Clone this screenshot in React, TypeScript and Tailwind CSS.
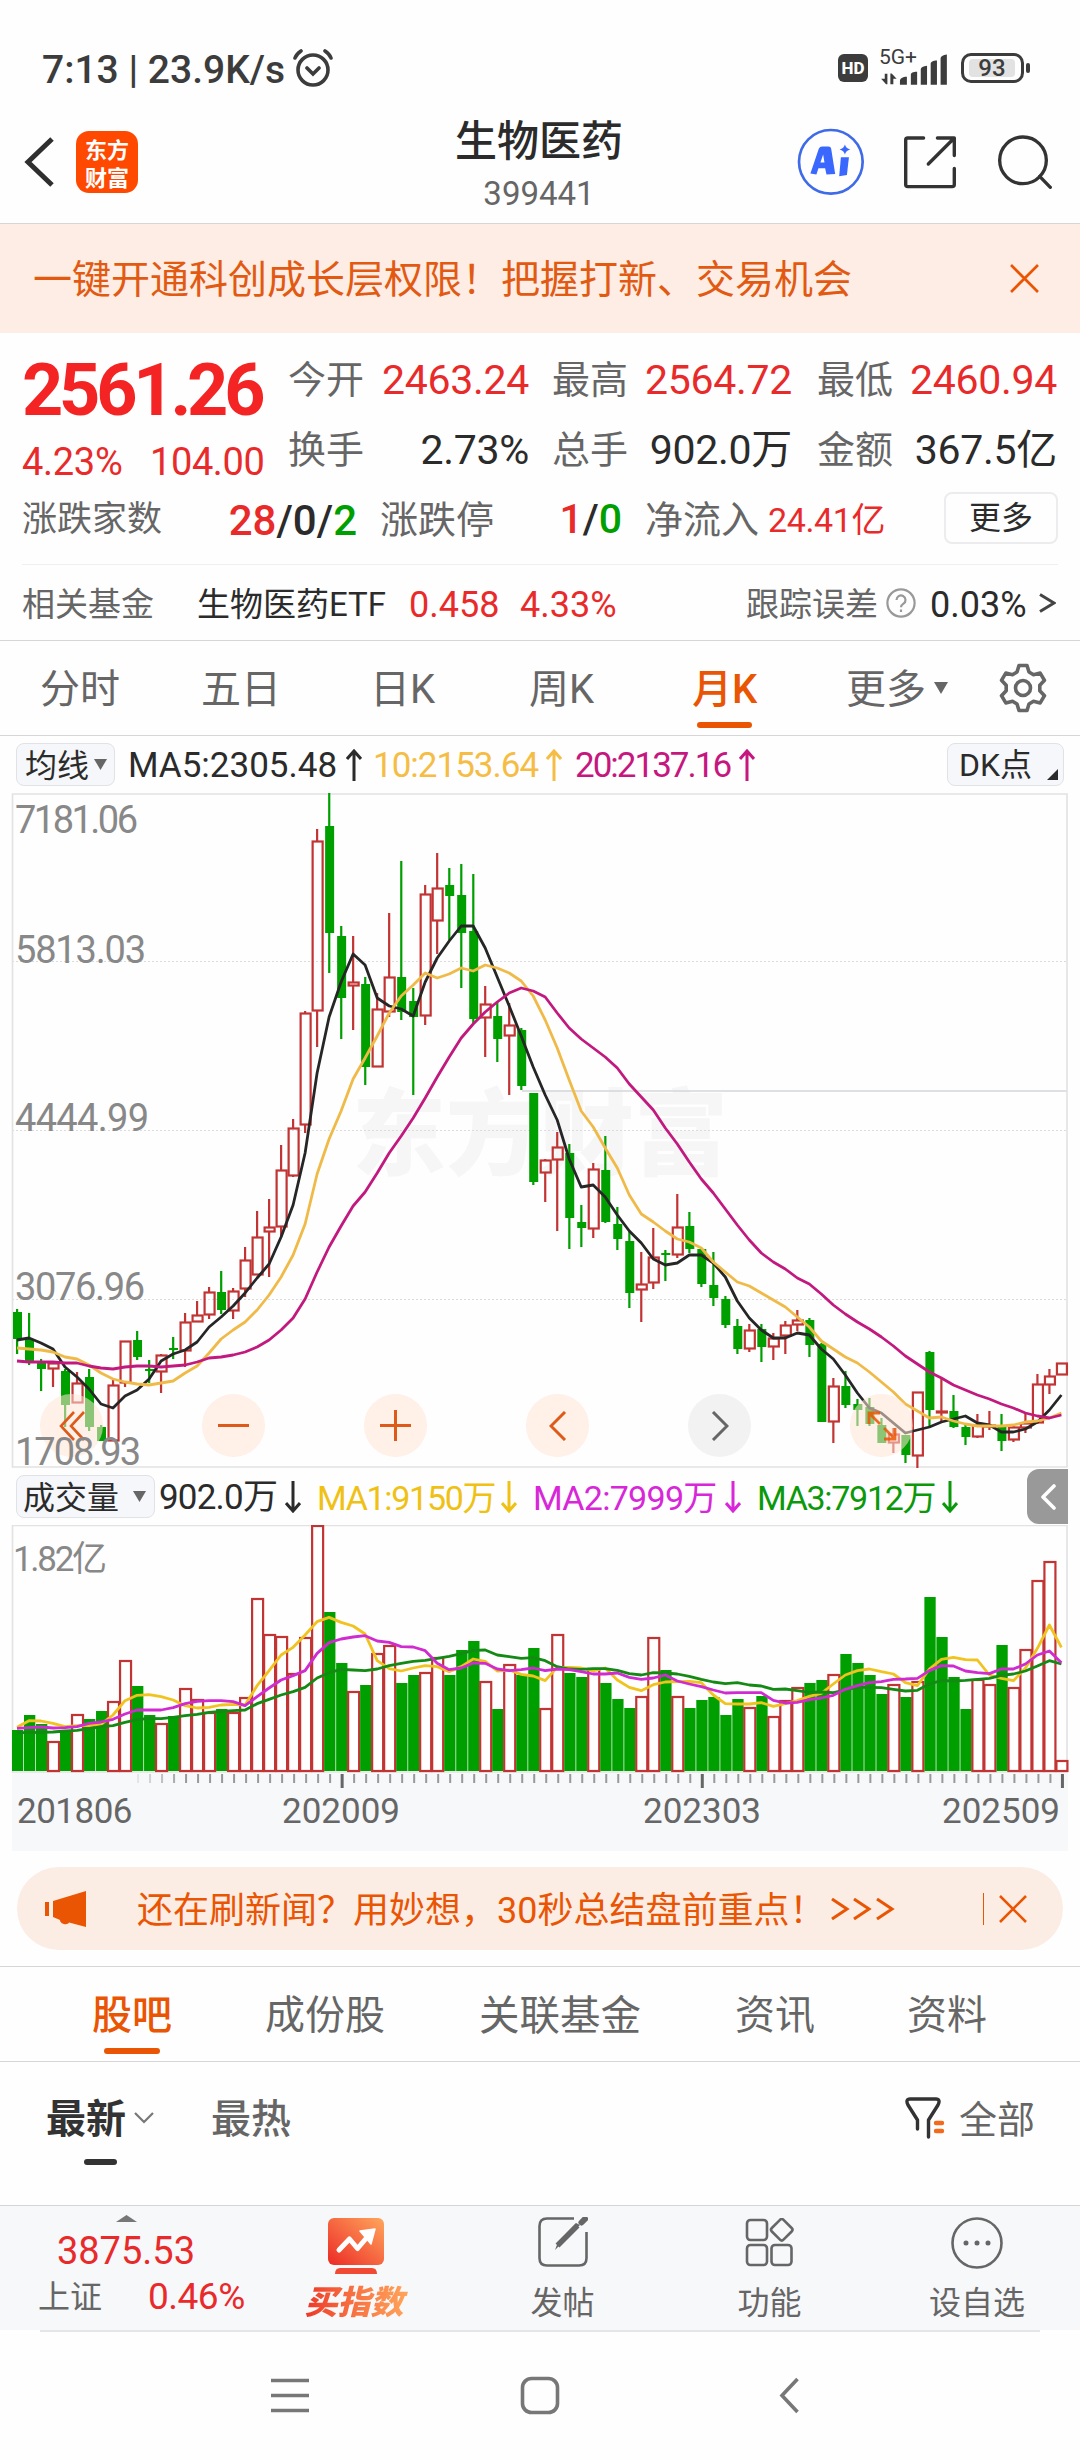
import type { ReactNode } from 'react';
import { twMerge } from 'tailwind-merge';

const STEP = 12.005;
const FIRST_X = 17;

// [direction, high, body top, body bottom, low]
type Candle = [0 | 1, number, number, number, number];

const candles: Candle[] = [
  [0, 1309, 1312, 1339, 1354], [0, 1313, 1339, 1362, 1365], [0, 1359, 1363, 1369, 1391], [1, 1363, 1363, 1369, 1387],
  [0, 1369, 1371, 1405, 1427], [1, 1372, 1383, 1403, 1403], [0, 1369, 1377, 1427, 1431], [0, 1425, 1427, 1441, 1441],
  [1, 1379, 1385, 1441, 1441], [1, 1341, 1341, 1383, 1387], [0, 1331, 1340, 1357, 1360], [0, 1360, 1369, 1371, 1383],
  [1, 1354, 1355, 1372, 1393], [0, 1337, 1348, 1350, 1359], [1, 1313, 1322, 1351, 1367], [1, 1301, 1315, 1322, 1322],
  [1, 1287, 1292, 1315, 1319], [0, 1271, 1292, 1310, 1314], [1, 1288, 1291, 1311, 1319], [1, 1247, 1260, 1289, 1297],
  [1, 1211, 1237, 1275, 1275], [1, 1199, 1227, 1232, 1277], [1, 1145, 1170, 1227, 1237], [1, 1119, 1128, 1176, 1177],
  [1, 1011, 1013, 1125, 1133], [1, 829, 841, 1011, 1047], [0, 793, 826, 933, 973], [0, 926, 936, 998, 1039],
  [1, 936, 982, 986, 1030], [0, 977, 984, 1067, 1085], [1, 993, 1009, 1067, 1067], [1, 913, 977, 1012, 1017],
  [0, 861, 977, 1012, 1020], [0, 988, 1001, 1017, 1095], [1, 885, 894, 1016, 1025], [1, 853, 888, 921, 954],
  [0, 868, 885, 896, 940], [0, 864, 895, 933, 988], [0, 874, 931, 1019, 1023], [1, 986, 1004, 1018, 1057],
  [0, 1002, 1016, 1039, 1062], [1, 1003, 1025, 1036, 1095], [0, 1028, 1030, 1086, 1090], [0, 1093, 1093, 1182, 1185],
  [1, 1159, 1160, 1173, 1202], [1, 1132, 1147, 1160, 1231], [0, 1144, 1153, 1218, 1249], [0, 1205, 1222, 1228, 1247],
  [1, 1163, 1169, 1229, 1238], [0, 1136, 1170, 1222, 1223], [0, 1207, 1224, 1239, 1250], [0, 1232, 1241, 1293, 1308],
  [1, 1252, 1284, 1290, 1322], [1, 1228, 1257, 1283, 1289], [0, 1250, 1253, 1255, 1281], [1, 1194, 1227, 1255, 1258],
  [0, 1212, 1226, 1249, 1253], [0, 1249, 1249, 1284, 1287], [0, 1252, 1285, 1298, 1306], [0, 1296, 1299, 1325, 1328],
  [0, 1319, 1326, 1349, 1354], [1, 1324, 1330, 1349, 1352], [0, 1324, 1329, 1347, 1362], [1, 1333, 1338, 1347, 1360],
  [1, 1321, 1325, 1336, 1354], [1, 1310, 1320, 1325, 1331], [0, 1318, 1320, 1345, 1357], [0, 1343, 1344, 1422, 1422],
  [1, 1378, 1386, 1422, 1443], [0, 1371, 1386, 1405, 1408], [0, 1399, 1404, 1410, 1426], [0, 1398, 1407, 1424, 1426],
  [0, 1418, 1425, 1443, 1443], [1, 1428, 1434, 1443, 1453], [0, 1435, 1435, 1455, 1463], [1, 1392, 1392, 1456, 1468],
  [0, 1351, 1352, 1410, 1427], [1, 1378, 1411, 1412, 1423], [0, 1395, 1411, 1427, 1428], [0, 1425, 1427, 1437, 1445],
  [1, 1414, 1425, 1437, 1438], [1, 1411, 1425, 1427, 1430], [0, 1414, 1427, 1441, 1451], [1, 1425, 1427, 1440, 1442],
  [1, 1413, 1423, 1428, 1433], [1, 1374, 1384, 1423, 1424], [1, 1369, 1376, 1385, 1394], [1, 1363, 1363, 1375, 1375],
];

const ma5 = [
  1340, 1338, 1343, 1349, 1367, 1377, 1389, 1404, 1408, 1396, 1390, 1379, 1361, 1354, 1350, 1342, 1327, 1317, 1306, 1293,
  1278, 1264, 1237, 1205, 1153, 1073, 1017, 982, 954, 965, 998, 1006, 1009, 1016, 982, 958, 941, 926, 926, 948, 977, 1006,
  1036, 1067, 1095, 1120, 1159, 1187, 1185, 1197, 1215, 1231, 1243, 1259, 1265, 1263, 1255, 1255, 1263, 1277, 1301, 1318,
  1330, 1338, 1338, 1333, 1335, 1349, 1359, 1375, 1393, 1408, 1413, 1423, 1433, 1430, 1427, 1422, 1419, 1416, 1423, 1425,
  1432, 1432, 1429, 1422, 1410, 1395,
];
const ma10 = [
  1348, 1349, 1350, 1352, 1357, 1359, 1365, 1373, 1379, 1382, 1384, 1385, 1383, 1381, 1373, 1366, 1353, 1339, 1330, 1322,
  1310, 1295, 1277, 1255, 1224, 1174, 1139, 1111, 1079, 1058, 1036, 1013, 996, 985, 973, 978, 974, 968, 971, 965, 968, 973,
  981, 996, 1020, 1048, 1080, 1111, 1127, 1148, 1168, 1195, 1214, 1222, 1231, 1239, 1242, 1248, 1262, 1272, 1282, 1286,
  1293, 1300, 1307, 1317, 1327, 1341, 1349, 1357, 1363, 1372, 1382, 1392, 1404, 1411, 1418, 1417, 1421, 1424, 1426, 1426,
  1426, 1425, 1422, 1421, 1418, 1413,
];
const ma20 = [
  1361, 1362, 1362, 1362, 1363, 1363, 1366, 1368, 1369, 1367, 1366, 1366, 1367, 1366, 1365, 1362, 1358, 1357, 1355, 1352,
  1347, 1340, 1330, 1318, 1299, 1272, 1247, 1226, 1206, 1192, 1173, 1153, 1136, 1118, 1098, 1077, 1057, 1038, 1024, 1012,
  1002, 993, 988, 991, 997, 1013, 1028, 1039, 1048, 1057, 1068, 1084, 1097, 1110, 1128, 1144, 1162, 1179, 1193, 1209, 1225,
  1240, 1253, 1262, 1269, 1278, 1284, 1294, 1305, 1314, 1322, 1329, 1337, 1346, 1356, 1364, 1372, 1378, 1385, 1390, 1395,
  1399, 1404, 1408, 1413, 1416, 1418, 1415,
];

const volumes = [
  1730, 1715, 1724, 1741, 1730, 1714, 1719, 1711, 1701, 1660, 1686, 1715, 1723, 1716, 1688, 1699, 1712, 1709, 1712, 1697,
  1598, 1634, 1636, 1673, 1637, 1525, 1612, 1663, 1691, 1685, 1653, 1645, 1683, 1675, 1672, 1657, 1675, 1650, 1641, 1681,
  1709, 1664, 1675, 1648, 1708, 1634, 1673, 1677, 1668, 1683, 1699, 1708, 1696, 1637, 1670, 1696, 1708, 1700, 1697, 1715,
  1699, 1707, 1696, 1716, 1700, 1687, 1683, 1680, 1674, 1654, 1663, 1675, 1694, 1684, 1697, 1681, 1597, 1637, 1677, 1709,
  1679, 1684, 1645, 1687, 1649, 1580, 1561, 1760,
];
const volMa1 = [
  802, 782, 783, 790, 800, 797, 797, 793, 765, 722, 706, 704, 710, 720, 737, 744, 742, 735, 733, 735, 677, 632, 585, 562, 525,
  485, 472, 487, 498, 522, 602, 626, 633, 624, 617, 620, 635, 620, 597, 604, 633, 630, 643, 648, 662, 622, 622, 624, 633, 624,
  660, 682, 692, 674, 666, 665, 664, 668, 705, 731, 732, 732, 728, 739, 731, 722, 709, 700, 672, 645, 632, 627, 635, 642, 668,
  677, 627, 598, 592, 599, 600, 645, 655, 662, 625, 565, 495, 562,
];
const volMa2 = [
  805, 803, 801, 804, 803, 800, 790, 786, 778, 762, 750, 750, 750, 743, 731, 724, 722, 722, 725, 737, 710, 684, 660, 647, 632,
  580, 548, 537, 531, 527, 543, 547, 560, 561, 572, 610, 629, 624, 609, 610, 627, 632, 629, 624, 632, 627, 629, 635, 642, 642,
  639, 652, 658, 654, 645, 663, 672, 680, 690, 699, 698, 698, 698, 721, 729, 727, 719, 714, 706, 688, 677, 668, 665, 658, 657,
  655, 632, 617, 618, 633, 638, 641, 627, 627, 612, 585, 573, 608,
];
const volMa3 = [
  818, 818, 817, 816, 813, 811, 806, 800, 797, 787, 779, 775, 776, 772, 767, 763, 757, 754, 752, 750, 731, 718, 705, 695, 682,
  654, 638, 628, 630, 632, 627, 617, 610, 604, 601, 595, 589, 581, 571, 570, 585, 590, 595, 593, 602, 620, 627, 628, 626, 626,
  631, 641, 645, 638, 639, 642, 649, 658, 666, 671, 668, 675, 678, 688, 687, 692, 697, 696, 698, 690, 682, 682, 683, 688, 693,
  691, 672, 662, 663, 661, 658, 655, 646, 642, 633, 618, 602, 612,
];

const priceLabels = [
  { text: '7181.06', y: 833, width: 123 },
  { text: '5813.03', y: 963, width: 131 },
  { text: '4444.99', y: 1131, width: 134 },
  { text: '3076.96', y: 1300, width: 130 },
  { text: '1708.93', y: 1465, width: 126 },
];

function xAt(index: number) {
  return FIRST_X + index * STEP;
}

function toPoints(values: number[]) {
  return values.map((y, i) => `${xAt(i).toFixed(1)},${y}`).join(' ');
}

function toVolumePoints(values: number[]) {
  return toPoints(values.map((v) => 1460 + v / 3));
}

function Text({ className, children }: { className?: string; children: ReactNode }) {
  return <span className={twMerge('block shrink-0 whitespace-nowrap translate-y-[1.5px]', className)}>{children}</span>;
}

function Arrow({ down, className }: { down?: boolean; className?: string }) {
  return (
    <svg viewBox="0 0 16 32" className={twMerge('w-4 h-8 shrink-0', className)} fill="none" stroke="currentColor" strokeWidth="3">
      {down ? <path d="M8 0v30M1 22l7 8 7-8" /> : <path d="M8 32V2M1 10l7-8 7 8" />}
    </svg>
  );
}

function StatusBar() {
  return (
    <div className="flex items-center h-[100px] pt-9 text-[#3c3c3c]">
      <Text className="ml-[42px] w-[246px] text-[39px] font-medium">7:13 | 23.9K/s</Text>
      <svg viewBox="0 0 40 38" className="ml-[5px] w-10 h-[38px] shrink-0" fill="none" stroke="currentColor" strokeWidth="3.6" strokeLinecap="round">
        <circle cx="20" cy="21" r="15" />
        <path d="M14 19l6 6 6-6M2 9c1-3 3-5 6-7M38 9c-1-3-3-5-6-7" />
      </svg>
      <div className="ml-auto w-[30px] h-7 rounded-md bg-[#3c3c3c] text-white text-[17px] font-extrabold leading-7 text-center">HD</div>
      <div className="relative ml-[9px] w-[74px] h-10">
        <span className="absolute left-0.5 -top-[3px] text-[21px] leading-6">5G+</span>
        <svg viewBox="290 20 215 115" className="w-[72px] h-[38px]" fill="currentColor">
          <path d="M312 98h8v32h-4l-15-17h11zM329 130V97h4l15 16h-10v17z" />
          <path d="M358 131v-12c0-6 8-12 21-12v24zM391 131v-30c0-5 6-9 19-9v39zM421 131V84c0-5 7-9 19-10v57zM451 131V68c0-6 7-10 19-10v73zM481 131V53c0-7 7-12 19-13v91z" />
        </svg>
      </div>
      <div className="ml-[10px] w-[63px] h-[30px] rounded-[10px] border-3 border-[#3c3c3c] p-[3px]">
        <div className="h-full w-[46px] ml-0.5 bg-[#e2e2e2] rounded-sm text-[24px] leading-[19px] font-medium text-center">93</div>
      </div>
      <div className="ml-0.5 mr-[50px] w-1 h-[10px] rounded-full bg-[#3c3c3c]" />
    </div>
  );
}

function Header() {
  return (
    <header className="flex items-center h-[124px] border-b border-[#d6d6d8]">
      <svg viewBox="0 0 30 50" className="ml-[24px] w-[30px] h-[50px]" fill="none" stroke="#2f2f2f" strokeWidth="5">
        <path d="M28 2L4 25l24 23" />
      </svg>
      <div className="ml-[22px] w-[62px] h-[62px] rounded-[13px] bg-[#ff4800] text-white font-['Noto_Sans_CJK_SC',sans-serif] font-bold text-[22px]">
        <div className="h-[28px] leading-[30px] pt-0.5 text-center">东方</div>
        <div className="h-[28px] leading-[30px] pt-0.5 text-center">财富</div>
      </div>
      <div className="flex-1 flex flex-col items-center ml-[182px] mr-[39px]">
        <Text className="text-[42px] leading-[56px] font-medium text-[#2b2b2b] mt-[5px]">生物医药</Text>
        <Text className="text-[33px] leading-[44px] text-[#666] mt-1 translate-y-0">399441</Text>
      </div>
      <div className="flex items-center mr-[28px]">
        <svg viewBox="52 264 200 200" className="w-[67px] h-[67px]">
          <circle cx="153" cy="365" r="95" fill="none" stroke="#3f6ae8" strokeWidth="8" />
          <path d="M92 400l25-74q3-7 10-7h19q7 0 8 7l12 75-26 2-4-19h-20l-6 19zM122 367h12l-4-24z" fill="#3a68ff" fillRule="evenodd" />
          <path d="M183 351h24l-6 53-23 4z" fill="#3a68ff" />
          <path d="M195 313q3 12 16 15-13 3-16 15-3-12-16-15 13-3 16-15z" fill="#3a68ff" />
        </svg>
        <svg viewBox="370 285 160 160" className="ml-[39px] w-[54px] h-[54px]" fill="none" stroke="#333" strokeWidth="10" strokeLinecap="round" strokeLinejoin="round">
          <path d="M431 294h-47q-6 0-6 6v132q0 6 6 6h132q6 0 6-6v-48M472 294h50v52M522 294l-77 77" />
        </svg>
        <svg viewBox="655 282 162 162" className="ml-[41px] w-[54px] h-[54px]" fill="none" stroke="#333" strokeWidth="10" strokeLinecap="round">
          <circle cx="730" cy="358" r="70" />
          <path d="M780 406l32 33" />
        </svg>
      </div>
    </header>
  );
}

function Close({ className }: { className?: string }) {
  return (
    <svg viewBox="0 0 28 28" className={twMerge('size-7', className)} stroke="#ea5504" strokeWidth="2.6">
      <path d="M1 1l26 26M27 1L1 27" />
    </svg>
  );
}

function Quote() {
  return (
    <section className="h-[308px] pt-[11px] border-b border-[#d6d6d8] text-[#2b2b2b]">
      <div className="flex h-[140px]">
        <div className="w-[288px] pl-[22px] text-[#e92a2a]">
          <Text className="h-[94px] text-[72px] leading-[94px] font-bold tracking-[-4.2px] text-[#f52424] translate-y-0">2561.26</Text>
          <div className="flex h-[44px] text-[38px] leading-[44px]">
            <Text className="w-[128px] tracking-[-0.3px]">4.23%</Text>
            <Text className="tracking-[-0.4px]">104.00</Text>
          </div>
        </div>
        <div className="grid grid-cols-[241px_23px_240px_25px_240px] grid-rows-2 text-[41px] leading-[73px] text-[#2b2b2b]">
          <QuoteCell label="今开" value="2463.24" up />
          <i />
          <QuoteCell label="最高" value="2564.72" up />
          <i />
          <QuoteCell label="最低" value="2460.94" up />
          <QuoteCell label="换手" value="2.73%" />
          <i />
          <QuoteCell label="总手" value="902.0万" />
          <i />
          <QuoteCell label="金额" value="367.5亿" />
        </div>
      </div>
      <div className="flex items-center h-[68px] pl-[22px] text-[38px] text-[#666]">
        <Text className="w-[140px] text-[35px]">涨跌家数</Text>
        <Text className="w-[195px] text-right text-[42px] font-medium text-[#2b2b2b]">
          <b className="font-medium text-[#e92a2a]">28</b>/0/<b className="font-medium text-[#009f00]">2</b>
        </Text>
        <Text className="ml-[23px] w-[116px]">涨跌停</Text>
        <Text className="w-[126px] text-right text-[41px] font-medium text-[#2b2b2b]">
          <b className="font-medium text-[#e92a2a]">1</b>/<b className="font-medium text-[#009f00]">0</b>
        </Text>
        <Text className="ml-[23px] w-[123px]">净流入</Text>
        <Text className="text-[34px] tracking-[-0.4px] text-[#e92a2a]">24.41亿</Text>
        <button className="ml-auto mr-[22px] w-[114px] h-[52px] rounded-lg border-2 border-[#ececee] text-[32px] leading-[48px] text-[#2b2b2b]">
          更多
        </button>
      </div>
      <div className="mx-[22px] mt-3 h-px bg-[#efeff1]" />
      <div className="flex items-center h-[75px] pl-[22px] text-[33px]">
        <Text className="w-[175px] text-[#666]">相关基金</Text>
        <Text className="w-[212px]">生物医药ETF</Text>
        <Text className="w-[111px] text-[36px]  text-[#e92a2a]">0.458</Text>
        <Text className="text-[36px] text-[#e92a2a]">4.33%</Text>
        <Text className="ml-auto text-[#666]">跟踪误差</Text>
        <svg viewBox="0 0 30 30" className="ml-2 size-[30px]" fill="none" stroke="#999" strokeWidth="2.2">
          <circle cx="15" cy="15" r="13.6" />
          <path d="M10.5 12a4.5 4.5 0 1 1 7 3.7c-1.800 1.200-2.500 2-2.500 3.500M15 21.500v2.500" />
        </svg>
        <Text className="ml-[14px] w-[109px] text-[36px]">0.03%</Text>
        <svg viewBox="0 0 17 20" className="mr-6 w-[17px] h-5" fill="none" stroke="#444" strokeWidth="3">
          <path d="M1 1.500l14 8.500-14 8.500" />
        </svg>
      </div>
    </section>
  );
}

function QuoteCell({ label, value, up }: { label: string; value: string; up?: boolean }) {
  return (
    <div className="flex justify-between">
      <span className="text-[38px] text-[#666]">{label}</span>
      <span className={up ? 'tracking-[-0.3px] text-[#e92a2a]' : 'tracking-[-0.3px]'}>{value}</span>
    </div>
  );
}

function PeriodTabs() {
  return (
    <nav className="flex items-center h-[95px] border-b border-[#d6d6d8] text-[40px] text-[#666]">
      <Text className="ml-10 w-[161px]">分时</Text>
      <Text className="w-[169px]">五日</Text>
      <Text className="w-[159px]">日K</Text>
      <Text className="w-[163px]">周K</Text>
      <div className="relative flex items-center h-full w-[154px] text-[#ea5504]">
        <Text className="font-medium">月K</Text>
        <span className="absolute left-[5px] bottom-[7px] w-[55px] h-[6px] rounded-full bg-[#ea5504]" />
      </div>
      <Text>更多</Text>
      <svg viewBox="0 0 14 12" className="ml-2 w-[14px] h-3" fill="#666">
        <path d="M0 0h14L7 12z" />
      </svg>
      <svg viewBox="0 0 48 50" className="ml-auto mr-[33px] w-12 h-[50px]" fill="none" stroke="#666" strokeWidth="3.600" strokeLinejoin="round">
        <path d="M20 2.500h8l2 6.500 4.500 2.700 6.700-1.600 4.300 7.200-4.700 5v5.400l4.700 5-4.300 7.200-6.700-1.600L30 41l-2 6.500h-8L18 41l-4.500-2.700-6.700 1.600-4.300-7.200 4.700-5v-5.400l-4.700-5 4.300-7.200 6.700 1.600L18 9z" />
        <circle cx="24" cy="25" r="7.500" />
      </svg>
    </nav>
  );
}

function MaLegend() {
  return (
    <div className="flex items-center h-[57px] text-[35px]">
      <button className="flex items-center ml-4 w-[99px] h-[43px] pl-2 rounded-lg border border-[#e0e2e6] bg-[#f6f7fa] text-[32px] text-[#2b2b2b]">
        <Text className="translate-y-px">均线</Text>
        <svg viewBox="0 0 13 11" className="ml-[5px] w-[13px] h-[11px]" fill="#666">
          <path d="M0 0h13L6.500 11z" />
        </svg>
      </button>
      <Text className="ml-[13px] w-[218px] text-[#2b2b2b]">MA5:2305.48</Text>
      <Arrow className="text-[#2b2b2b]" />
      <Text className="ml-[11px] w-[173px] tracking-[-1px] text-[#f5bd45]">10:2153.64</Text>
      <Arrow className="text-[#f5bd45]" />
      <Text className="ml-[13px] w-[164px] tracking-[-2px] text-[#c6177f]">20:2137.16</Text>
      <Arrow className="text-[#c6177f]" />
      <button className="flex items-end ml-auto mr-4 w-[117px] h-[43px] pl-[11px] rounded-lg border border-[#e0e2e6] bg-[#f6f7fa] text-[32px] leading-[42px] text-[#2b2b2b]">
        <Text className="translate-y-px">DK点</Text>
        <svg viewBox="0 0 11 11" className="ml-auto mr-[5px] mb-[5px] size-[11px]" fill="#2b2b2b">
          <path d="M11 0v11H0z" />
        </svg>
      </button>
    </div>
  );
}

const circle = 'flex items-center justify-center size-[63px] rounded-full bg-[#ffe4d6]/55 text-[#dd5a1a]';

function ChartControls() {
  return (
    <div className="absolute left-10 right-[167px] bottom-[11px] flex justify-between">
      <button className={circle}>
        <svg viewBox="0 0 26 30" className="w-[26px] h-[30px]" fill="none" stroke="currentColor" strokeWidth="2.600">
          <path d="M15 1L2 15l13 14M25 1L12 15l13 14" />
        </svg>
      </button>
      <button className={circle}>
        <span className="w-[31px] h-[3px] bg-current" />
      </button>
      <button className={circle}>
        <svg viewBox="0 0 31 31" className="size-[31px]" stroke="currentColor" strokeWidth="3">
          <path d="M0 15.500h31M15.500 0v31" />
        </svg>
      </button>
      <button className={circle}>
        <svg viewBox="0 0 18 30" className="w-[18px] h-[30px]" fill="none" stroke="currentColor" strokeWidth="3">
          <path d="M16 1L2 15l14 14" />
        </svg>
      </button>
      <button className={twMerge(circle, 'bg-[#e9e9e9]/60 text-[#666]')}>
        <svg viewBox="0 0 18 30" className="w-[18px] h-[30px]" fill="none" stroke="currentColor" strokeWidth="3">
          <path d="M2 1l14 14L2 29" />
        </svg>
      </button>
      <button className={circle}>
        <svg viewBox="0 0 32 32" className="size-8" fill="none" stroke="#ea5504" strokeOpacity="0.85" strokeWidth="2.800">
          <path d="M3 14V3h11M3 3l11 11M29 18v11H18M29 29L18 18" />
        </svg>
      </button>
    </div>
  );
}

function PriceChart() {
  return (
    <div className="relative h-[675px]">
      <svg viewBox="0 793 1080 675" className="w-[1080px] h-[675px]" fill="none">
        <text x="352" y="1168" fontSize="94" fontWeight="900" fill="#f6f6f6" textLength="376">
          东方财富
        </text>
        {[961.5, 1130.5, 1299.5].map((y) => (
          <path key={y} d={`M12 ${y}H1067`} stroke="#dcdcdc" strokeDasharray="2 2" />
        ))}
        <path d="M522 1091H1067" stroke="#d3d6da" strokeWidth="1.600" />
        <path d="M12.500 794H1067V1467H12.500z" stroke="#e2e2e4" strokeWidth="1.600" />
        {candles.map(([up, high, top, bottom, low], i) => {
          const x = xAt(i);
          if (up) {
            return (
              <g key={i} stroke="#c23434" strokeWidth="2.200">
                <path d={`M${x} ${high}V${top}M${x} ${bottom}V${low}`} />
                <rect x={x - 4.5} y={top + 0.5} width="10" height={Math.max(bottom - top - 1, 1)} />
              </g>
            );
          }
          return (
            <g key={i} fill="#009f00">
              <rect x={x - 1} y={high} width="2.200" height={low - high} />
              <rect x={x - 4} y={top} width="9" height={bottom - top} />
            </g>
          );
        })}
        <polyline points={toPoints(ma5)} stroke="#262626" strokeWidth="2.800" strokeLinejoin="round" />
        <polyline points={toPoints(ma10)} stroke="#f0ba48" strokeWidth="2.800" strokeLinejoin="round" />
        <polyline points={toPoints(ma20)} stroke="#c2197f" strokeWidth="2.800" strokeLinejoin="round" />
      </svg>
      <ChartControls />
      <svg viewBox="0 793 200 675" className="absolute left-0 top-0 w-[200px] h-[675px] overflow-visible pointer-events-none">
        {priceLabels.map(({ text, y, width }) => (
          <text key={text} x="15" y={y} fontSize="38" fill="#888" textLength={width}>
            {text}
          </text>
        ))}
      </svg>
    </div>
  );
}

function VolumeLegend() {
  return (
    <div className="flex items-center h-[57px] text-[34px]">
      <button className="flex items-center ml-4 w-[139px] h-[43px] pl-1.5 rounded-lg border border-[#e0e2e6] bg-[#f6f7fa] text-[32px] text-[#2b2b2b]">
        <Text className="translate-y-px">成交量</Text>
        <svg viewBox="0 0 13 11" className="ml-[14px] w-[13px] h-[11px]" fill="#666">
          <path d="M0 0h13L6.500 11z" />
        </svg>
      </button>
      <Text className="ml-1 w-[126px] text-[35px] tracking-[-0.800px] text-[#2b2b2b]">902.0万</Text>
      <Arrow down className="text-[#2b2b2b]" />
      <Text className="ml-4 w-[184px] tracking-[-1.300px] text-[#efc114]">MA1:9150万</Text>
      <Arrow down className="text-[#efc114]" />
      <Text className="ml-4 w-[192px] tracking-[-0.700px] text-[#d727d8]">MA2:7999万</Text>
      <Arrow down className="text-[#d727d8]" />
      <Text className="ml-4 w-[185px] tracking-[-1.300px] text-[#0b990b]">MA3:7912万</Text>
      <Arrow down className="text-[#0b990b]" />
      <button className="flex items-center justify-center ml-auto mr-3 w-[41px] h-[55px] rounded-l-xl bg-[#999]">
        <svg viewBox="0 0 16 26" className="w-4 h-[26px]" fill="none" stroke="#fff" strokeWidth="3.600" strokeLinecap="round" strokeLinejoin="round">
          <path d="M14 2L3 13l11 11" />
        </svg>
      </button>
    </div>
  );
}

function VolumeChart() {
  return (
    <svg viewBox="0 1525 1080 248" className="block w-[1080px] h-[248px]" fill="none">
      <path d="M12.500 1772V1525.500H1067V1772z" stroke="#e2e2e4" strokeWidth="1.600" />
      <text x="13" y="1571" fontSize="35" fill="#888" textLength="94">
        1.82亿
      </text>
      {volumes.map((top, i) => {
        const x = xAt(i);
        // 2024-11 closed up on a falling index, so its bar stays green
        const up = candles[i][0] && i !== 77;
        return up ? (
          <rect key={i} x={x - 5} y={top + 1} width="11" height={1770 - top} stroke="#c23434" strokeWidth="2.200" />
        ) : (
          <rect key={i} x={x - 5} y={top} width="11.300" height={1771 - top} fill="#009f00" />
        );
      })}
      <polyline points={toVolumePoints(volMa1)} stroke="#f0c31e" strokeWidth="2.800" strokeLinejoin="round" />
      <polyline points={toVolumePoints(volMa3)} stroke="#138a13" strokeWidth="2.800" strokeLinejoin="round" />
      <polyline points={toVolumePoints(volMa2)} stroke="#cf2bd0" strokeWidth="2.800" strokeLinejoin="round" />
    </svg>
  );
}

function TimeAxis() {
  return (
    <div className="mx-3 h-[78px] bg-[#f7f8fa] text-[#666]">
      <svg viewBox="12 0 1056 16" className="block w-[1056px] h-4">
        {Array.from({ length: 78 }, (_, n) => n + 10).map((i) => {
          const major = i === 27 || i === 57 || i === 87;
          return (
            <rect
              key={i}
              x={xAt(i) - (major ? 0.5 : 0)}
              y="1"
              width={major ? 3 : 2}
              height={major ? 14 : 9}
              fill={major ? '#666' : '#999'}
              opacity={Math.min(1, (i - 9) / 5)}
            />
          );
        })}
      </svg>
      <div className="flex text-[35px] leading-[42px]">
        <Text className="ml-[5px] w-[265px] tracking-[-0.500px]">201806</Text>
        <Text className="w-[361px]">202009</Text>
        <Text className="w-[299px]">202303</Text>
        <Text>202509</Text>
      </div>
    </div>
  );
}

function Promo() {
  return (
    <div className="flex items-center mx-[17px] my-4 h-[83px] rounded-full bg-[#fcede4] text-[#ea5504] text-[36px]">
      <svg viewBox="0 0 42 38" className="ml-7 w-[42px] h-[38px]" fill="currentColor">
        <path d="M0 12h4v14H0zM8 11L41 1v36l-17-4.500c-1 3-9 2-9-2.500L8 27z" />
      </svg>
      <Text className="ml-[50px] w-[694px]">还在刷新闻？用妙想，30秒总结盘前重点！</Text>
      <svg viewBox="0 0 64 22" className="w-16 h-[22px]" fill="none" stroke="currentColor" strokeWidth="3">
        <path d="M1 1l15 10L1 21M23 1l15 10-15 10M46 1l15 10-15 10" />
      </svg>
      <span className="ml-auto w-px h-8 bg-[#ea5504]" />
      <Close className="ml-[15px] mr-9" />
    </div>
  );
}

function CommunityTabs() {
  return (
    <nav className="flex items-center h-24 border-y border-[#d6d6d8] text-[40px] text-[#666]">
      <div className="relative flex items-center h-full ml-[92px] w-[173px] text-[#ea5504]">
        <Text className="font-medium">股吧</Text>
        <span className="absolute left-3 bottom-[7px] w-14 h-[6px] rounded-full bg-[#ea5504]" />
      </div>
      <Text className="w-[214px]">成份股</Text>
      <Text className="w-[256px] text-[40.500px]">关联基金</Text>
      <Text className="w-[172px]">资讯</Text>
      <Text>资料</Text>
    </nav>
  );
}

function SortRow() {
  return (
    <div className="h-[143px] text-[40px] text-[#666]">
      <div className="flex items-center h-28">
        <div className="relative flex items-center h-full ml-[46px] text-[#333]">
          <Text className="font-bold">最新</Text>
          <span className="absolute left-[38px] bottom-[9px] w-[33px] h-[6px] rounded-full bg-[#333]" />
        </div>
        <svg viewBox="0 0 20 12" className="ml-2 w-5 h-3" fill="none" stroke="#777" strokeWidth="2.200">
          <path d="M1 1l9 9 9-9" />
        </svg>
        <Text className="ml-[57px] font-medium">最热</Text>
        <svg viewBox="0 0 40 42" className="ml-auto w-10 h-[42px]" fill="none" strokeWidth="3.400" strokeLinecap="round" strokeLinejoin="round">
          <path d="M12.500 32V23L3 8C1 4 2 2 5 2h26c3 0 4 2 2 6l-9.500 15v17" stroke="#333" />
          <path d="M31 26h6M31 34h6" stroke="#f26a1b" strokeWidth="4.400" />
        </svg>
        <Text className="ml-[14px] mr-[45px] text-[38px]">全部</Text>
      </div>
    </div>
  );
}

function BottomBar() {
  return (
    <div className="flex h-[125px] border-t border-[#d3d4d6] bg-[#f7f8fa] text-[32px] leading-[40px] text-[#666]">
      <div className="flex flex-col items-center w-[252px] pt-[9px]">
        <svg viewBox="0 0 21 7" className="w-[21px] h-[7px]" fill="#777">
          <path d="M10.500 0L21 7H0z" />
        </svg>
        <Text className="mt-[7px] text-[38px] leading-[44px] text-[#e92a2a] translate-y-0">3875.53</Text>
        <div className="flex items-center h-[44px] ml-[28px] self-start">
          <Text className="ml-2.5 w-[110px]">上证</Text>
          <Text className="text-[37px] tracking-[-0.500px] text-[#e92a2a]">0.46%</Text>
        </div>
      </div>
      <div className="flex flex-col items-center w-[208px] pt-3">
        <svg viewBox="0 0 56 56" className="size-14">
          <defs>
            <linearGradient id="buy" x1="0" y1="1" x2="1" y2="0">
              <stop offset="0" stopColor="#ec2a26" />
              <stop offset="1" stopColor="#ffa65c" />
            </linearGradient>
          </defs>
          <rect width="56" height="47" rx="6" fill="url(#buy)" />
          <path d="M12 50h32q5 0 5 6H7q0-6 5-6z" fill="#f04a34" />
          <path d="M11 32l10.500-11 8 9.500L41 17" fill="none" stroke="#fff" strokeWidth="5" strokeLinecap="round" strokeLinejoin="round" />
          <path d="M32 13l15-2-4 15z" fill="#fff" stroke="#fff" strokeWidth="1.500" strokeLinejoin="round" />
        </svg>
        <Text className="mt-[7px] -ml-1 px-1.5 text-[33px] italic font-black bg-linear-to-r from-[#ec2a26] to-[#ffa65c] bg-clip-text text-transparent">
          买指数
        </Text>
      </div>
      <div className="flex flex-col items-center w-[205px] pt-[11px]">
        <svg viewBox="0 0 50 50" className="size-[50px]" fill="none" stroke="#666" strokeWidth="2.600">
          <path d="M36 1.500H9Q1.500 1.500 1.500 9v32q0 7.500 7.500 7.500h32q7.500 0 7.500-7.500V15" />
          <path d="M42 8L23 27l-6 6 3-8L38 6z" fill="#666" stroke="none" />
          <path d="M39.500 8.500L19.500 28.500" strokeWidth="5.500" />
          <path d="M43.500 5.500l3.500-3.500" strokeWidth="6" strokeLinecap="round" />
        </svg>
        <Text className="mt-[14px]">发帖</Text>
      </div>
      <div className="flex flex-col items-center w-[209px] pt-3">
        <svg viewBox="-0.500 0 49 49" className="size-[49px]" fill="none" stroke="#666" strokeWidth="2.600">
          <rect x="1.500" y="2" width="20" height="20" rx="3.500" />
          <rect x="1.500" y="27" width="20" height="20" rx="3.500" />
          <rect x="26" y="27" width="20" height="20" rx="3.500" />
          <rect x="28" y="3.500" width="16.500" height="16.500" rx="2.500" transform="rotate(45 36.250 11.750)" />
        </svg>
        <Text className="mt-[14px]">功能</Text>
      </div>
      <div className="flex flex-col items-center w-[206px] pt-[11px]">
        <svg viewBox="0 0 52 52" className="size-[52px]" fill="none" stroke="#666" strokeWidth="2.600">
          <circle cx="26" cy="26" r="24.500" />
          <path d="M15 26h.01M26 26h.01M37 26h.01" strokeWidth="5" strokeLinecap="round" />
        </svg>
        <Text className="mt-3">设自选</Text>
      </div>
    </div>
  );
}

function SystemNav() {
  return (
    <div className="mx-10 h-[130px] border-t-2 border-[#e4e5e7]">
      <svg viewBox="231 2365 529 60" className="block ml-[231px] mt-[33px] w-[529px] h-[60px]" fill="none" stroke="#777" strokeWidth="3.600">
        <path d="M231 2380.500h38M231 2395.500h38M231 2410.500h38" />
        <rect x="482.500" y="2378.500" width="35" height="34" rx="9" />
        <path d="M757.500 2379L742 2395.500l15.500 16.500" />
      </svg>
    </div>
  );
}

export default function App() {
  return (
    <div className="w-[1080px] h-[2460px] overflow-hidden bg-[#fefefe] font-[Roboto,'Noto_Sans_CJK_SC',sans-serif]">
      <StatusBar />
      <Header />
      <div className="flex items-center h-[109px] bg-[#fdede4] text-[39px] text-[#e25a12]">
        <Text className="ml-[33px]">一键开通科创成长层权限！把握打新、交易机会</Text>
        <Close className="ml-auto mr-[41px] size-[29px]" />
      </div>
      <Quote />
      <PeriodTabs />
      <MaLegend />
      <PriceChart />
      <VolumeLegend />
      <VolumeChart />
      <TimeAxis />
      <Promo />
      <CommunityTabs />
      <SortRow />
      <BottomBar />
      <SystemNav />
    </div>
  );
}
